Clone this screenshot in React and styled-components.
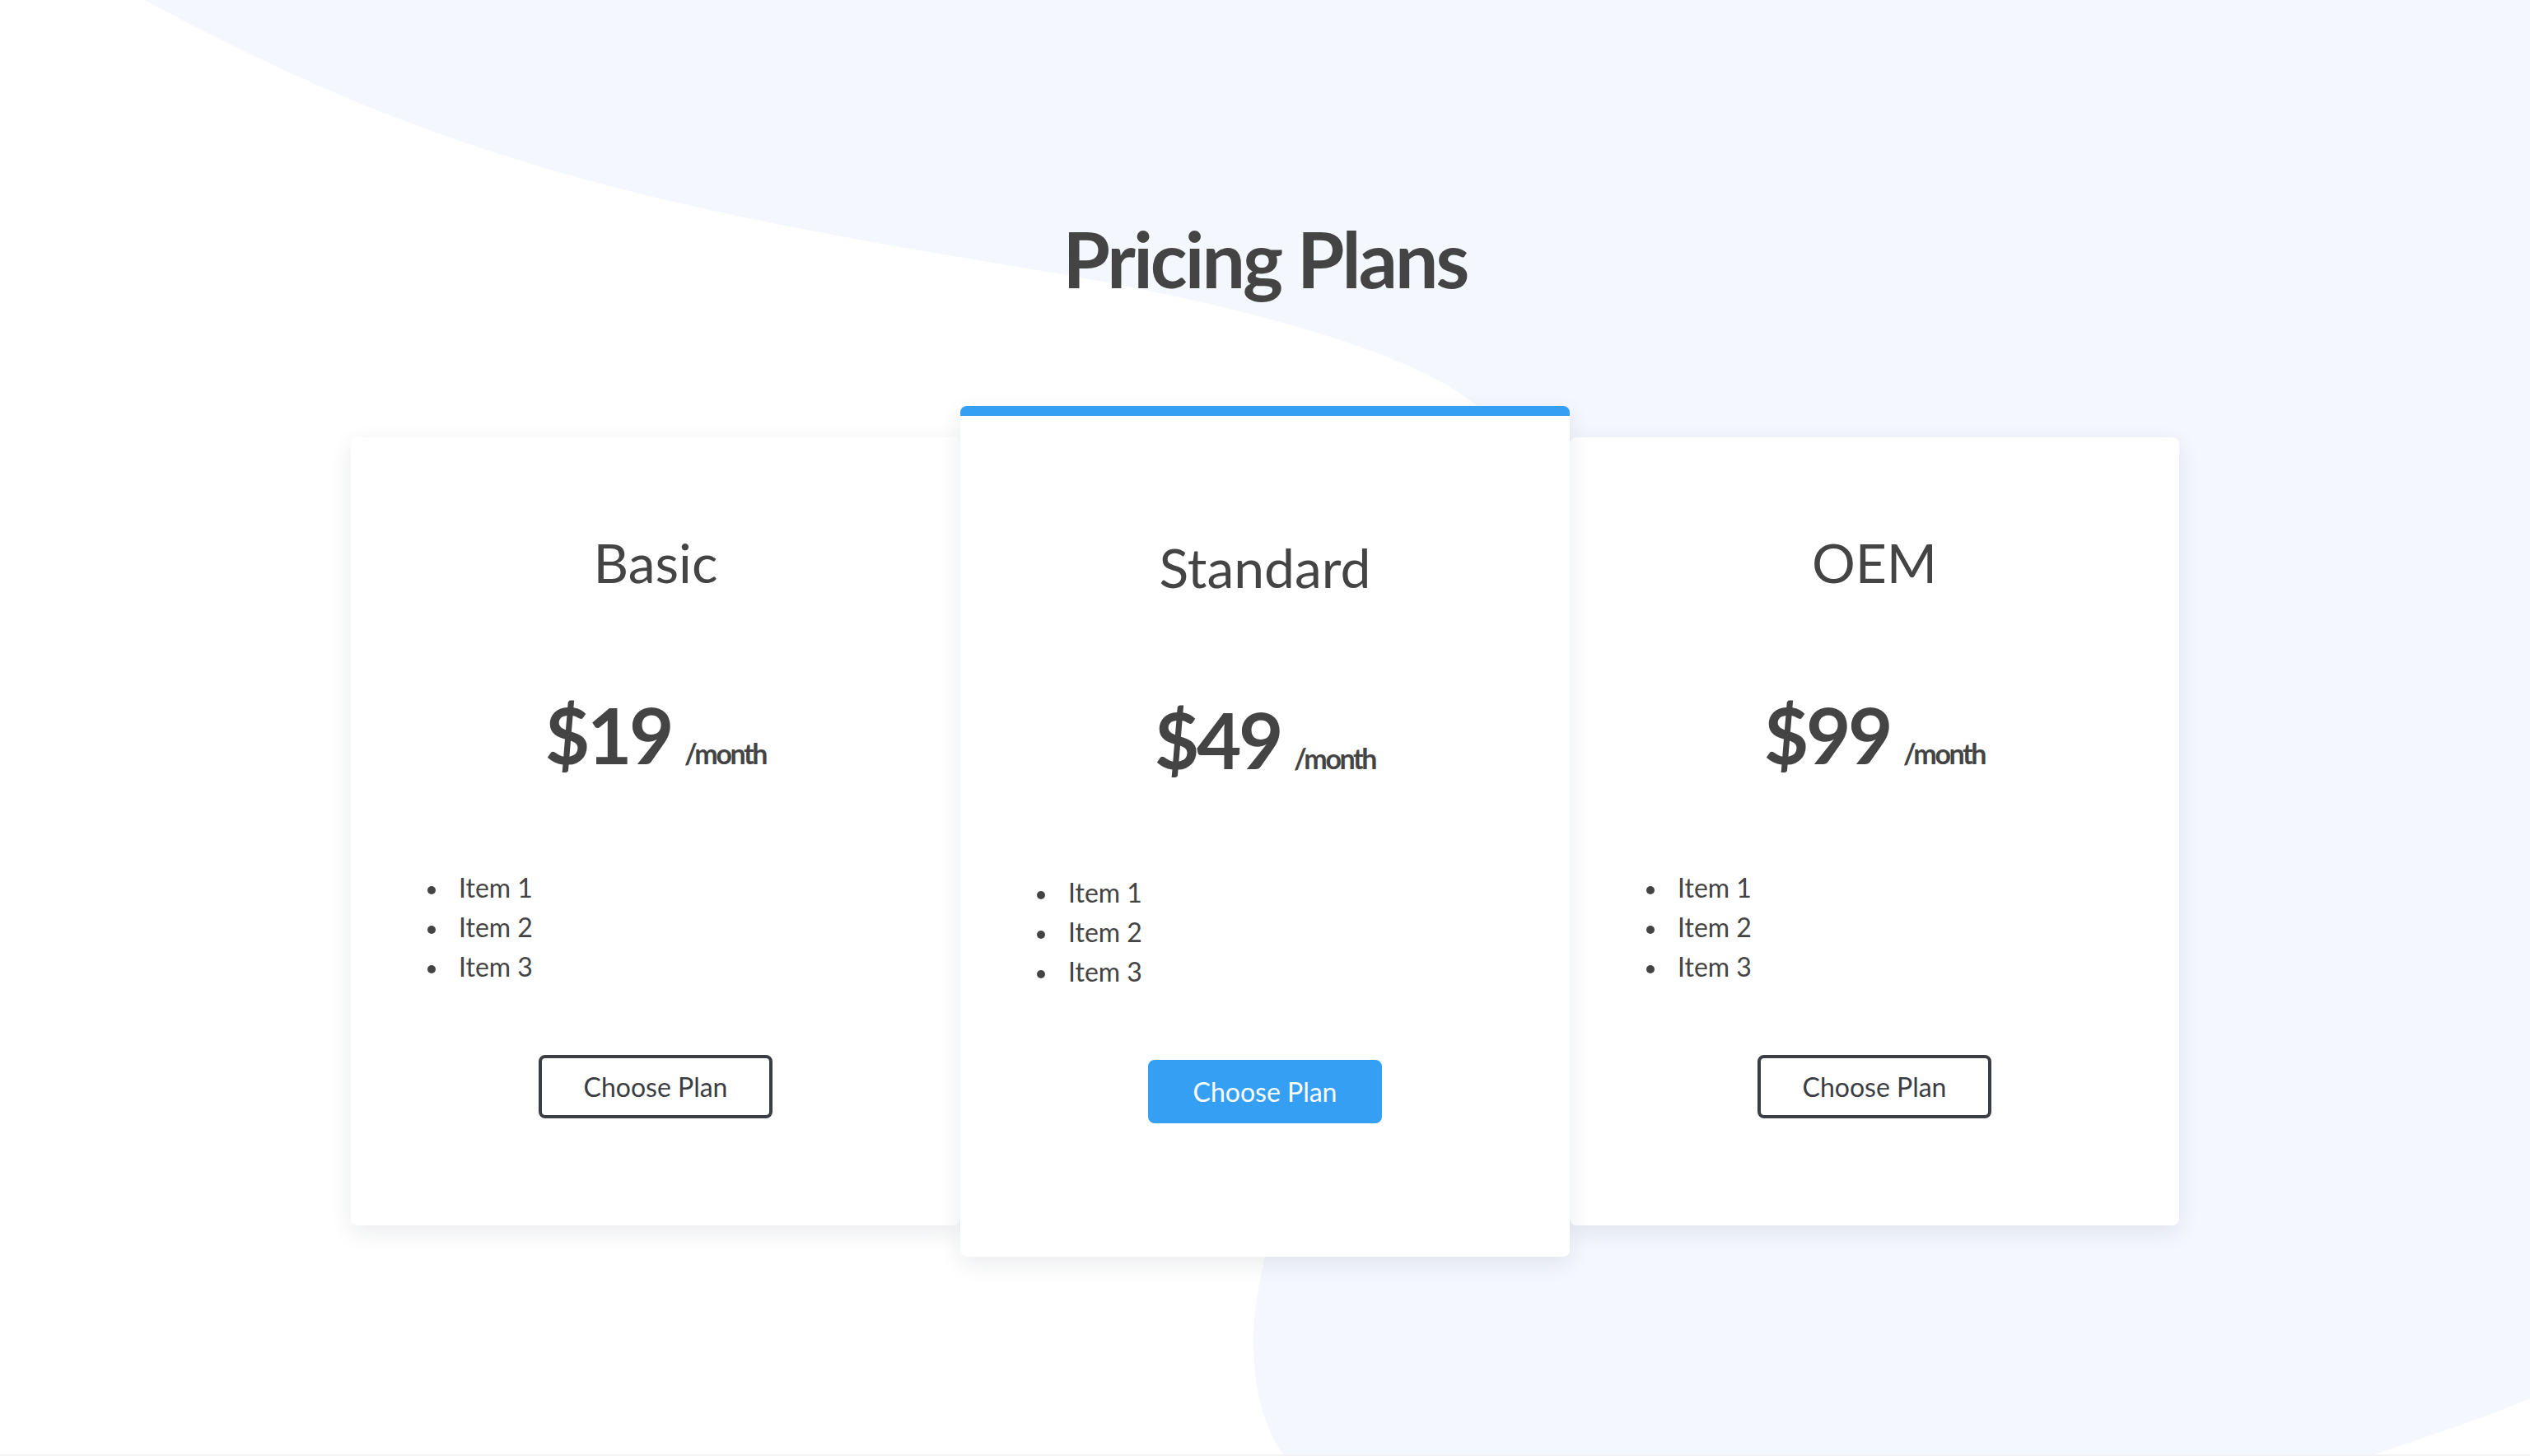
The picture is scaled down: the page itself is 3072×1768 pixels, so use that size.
import React from "react";
import styled, { createGlobalStyle } from "styled-components";

const Global = createGlobalStyle`
  html, body { margin: 0; padding: 0; background: #f3f3f5; }
  body { font-family: Lato, "Noto Sans", sans-serif; color: #444; }
  *, *::before, *::after { box-sizing: border-box; }
`;

const Page = styled.main`
  position: relative;
  min-height: 1766px;
  overflow: hidden;
  background: #fff;
  display: flex;
  flex-direction: column;
  align-items: center;
`;

const Backdrop = styled.svg`
  position: absolute;
  inset: 0;
  width: 100%;
  height: 100%;
  z-index: 0;
  pointer-events: none;
`;

const Title = styled.h1`
  position: relative;
  z-index: 1;
  margin: 259px 0 0;
  font-size: 93px;
  font-weight: 700;
  line-height: 1.2;
  letter-spacing: -2.9px;
  color: #444;
`;

const Plans = styled.section`
  position: relative;
  z-index: 1;
  display: flex;
  align-items: center;
  justify-content: center;
  margin-top: 122px;
`;

const Card = styled.article`
  position: relative;
  z-index: ${(p) => (p.$featured ? 2 : 1)};
  width: 740px;
  display: flex;
  flex-direction: column;
  align-items: center;
  background: #fff;
  border-radius: 8px;
  border-top: ${(p) => (p.$featured ? "12px solid #359ff4" : "0")};
  padding: ${(p) => (p.$featured ? "144px 0 162px" : "112px 0 130px")};
  box-shadow: 0 8px 28px rgba(20, 30, 60, 0.09);
`;

const PlanName = styled.h2`
  margin: 0;
  font-size: 66px;
  font-weight: 400;
  line-height: 1.2;
  color: #444;
`;

const Price = styled.div`
  margin-top: 114px;
  font-size: 94px;
  font-weight: 700;
  line-height: 1.2;
  letter-spacing: -3.5px;
  color: #444;
`;

const Per = styled.span`
  margin-left: 16px;
  font-size: 34px;
  font-weight: 700;
  letter-spacing: -2.4px;
`;

const Features = styled.ul`
  align-self: stretch;
  margin: 105px 0 0;
  padding: 0 0 0 131px;
  list-style: none;
  font-size: 32px;
  line-height: 48px;
  color: #444;
`;

const Feature = styled.li`
  position: relative;

  &::before {
    content: "";
    position: absolute;
    left: -38px;
    top: 22px;
    width: 10px;
    height: 10px;
    border-radius: 50%;
    background: #444;
  }
`;

const ChooseButton = styled.button`
  margin-top: 83px;
  height: 77px;
  padding: 0 51px;
  font-family: Lato, "Noto Sans", sans-serif;
  font-size: 32px;
  font-weight: 400;
  border-radius: 8px;
  cursor: pointer;
  border: 4px solid ${(p) => (p.$featured ? "#359ff4" : "#3a3d42")};
  background: ${(p) => (p.$featured ? "#359ff4" : "transparent")};
  color: ${(p) => (p.$featured ? "#fff" : "#3a3d42")};
`;

const plans = [
  { name: "Basic", price: "$19" },
  { name: "Standard", price: "$49", featured: true },
  { name: "OEM", price: "$99" },
];

export default function App() {
  return (
    <>
      <Global />
      <Page>
        <Backdrop viewBox="0 0 3072 1768" preserveAspectRatio="none" aria-hidden="true">
          <path
            fill="#f4f7fe"
            d="M176,0 C576,220 880,264 1280,332 C1450,361 1720,420 1800,500 L1900,700 L1560,1450 C1535,1520 1522,1580 1522,1630 C1522,1690 1535,1735 1558,1768 L2884,1768 C2960,1742 3020,1722 3072,1700 L3072,0 Z"
          />
        </Backdrop>
        <Title>Pricing Plans</Title>
        <Plans>
          {plans.map((p) => (
            <Card key={p.name} $featured={p.featured}>
              <PlanName>{p.name}</PlanName>
              <Price>
                {p.price}
                <Per>/month</Per>
              </Price>
              <Features>
                <Feature>Item 1</Feature>
                <Feature>Item 2</Feature>
                <Feature>Item 3</Feature>
              </Features>
              <ChooseButton $featured={p.featured}>Choose Plan</ChooseButton>
            </Card>
          ))}
        </Plans>
      </Page>
    </>
  );
}
